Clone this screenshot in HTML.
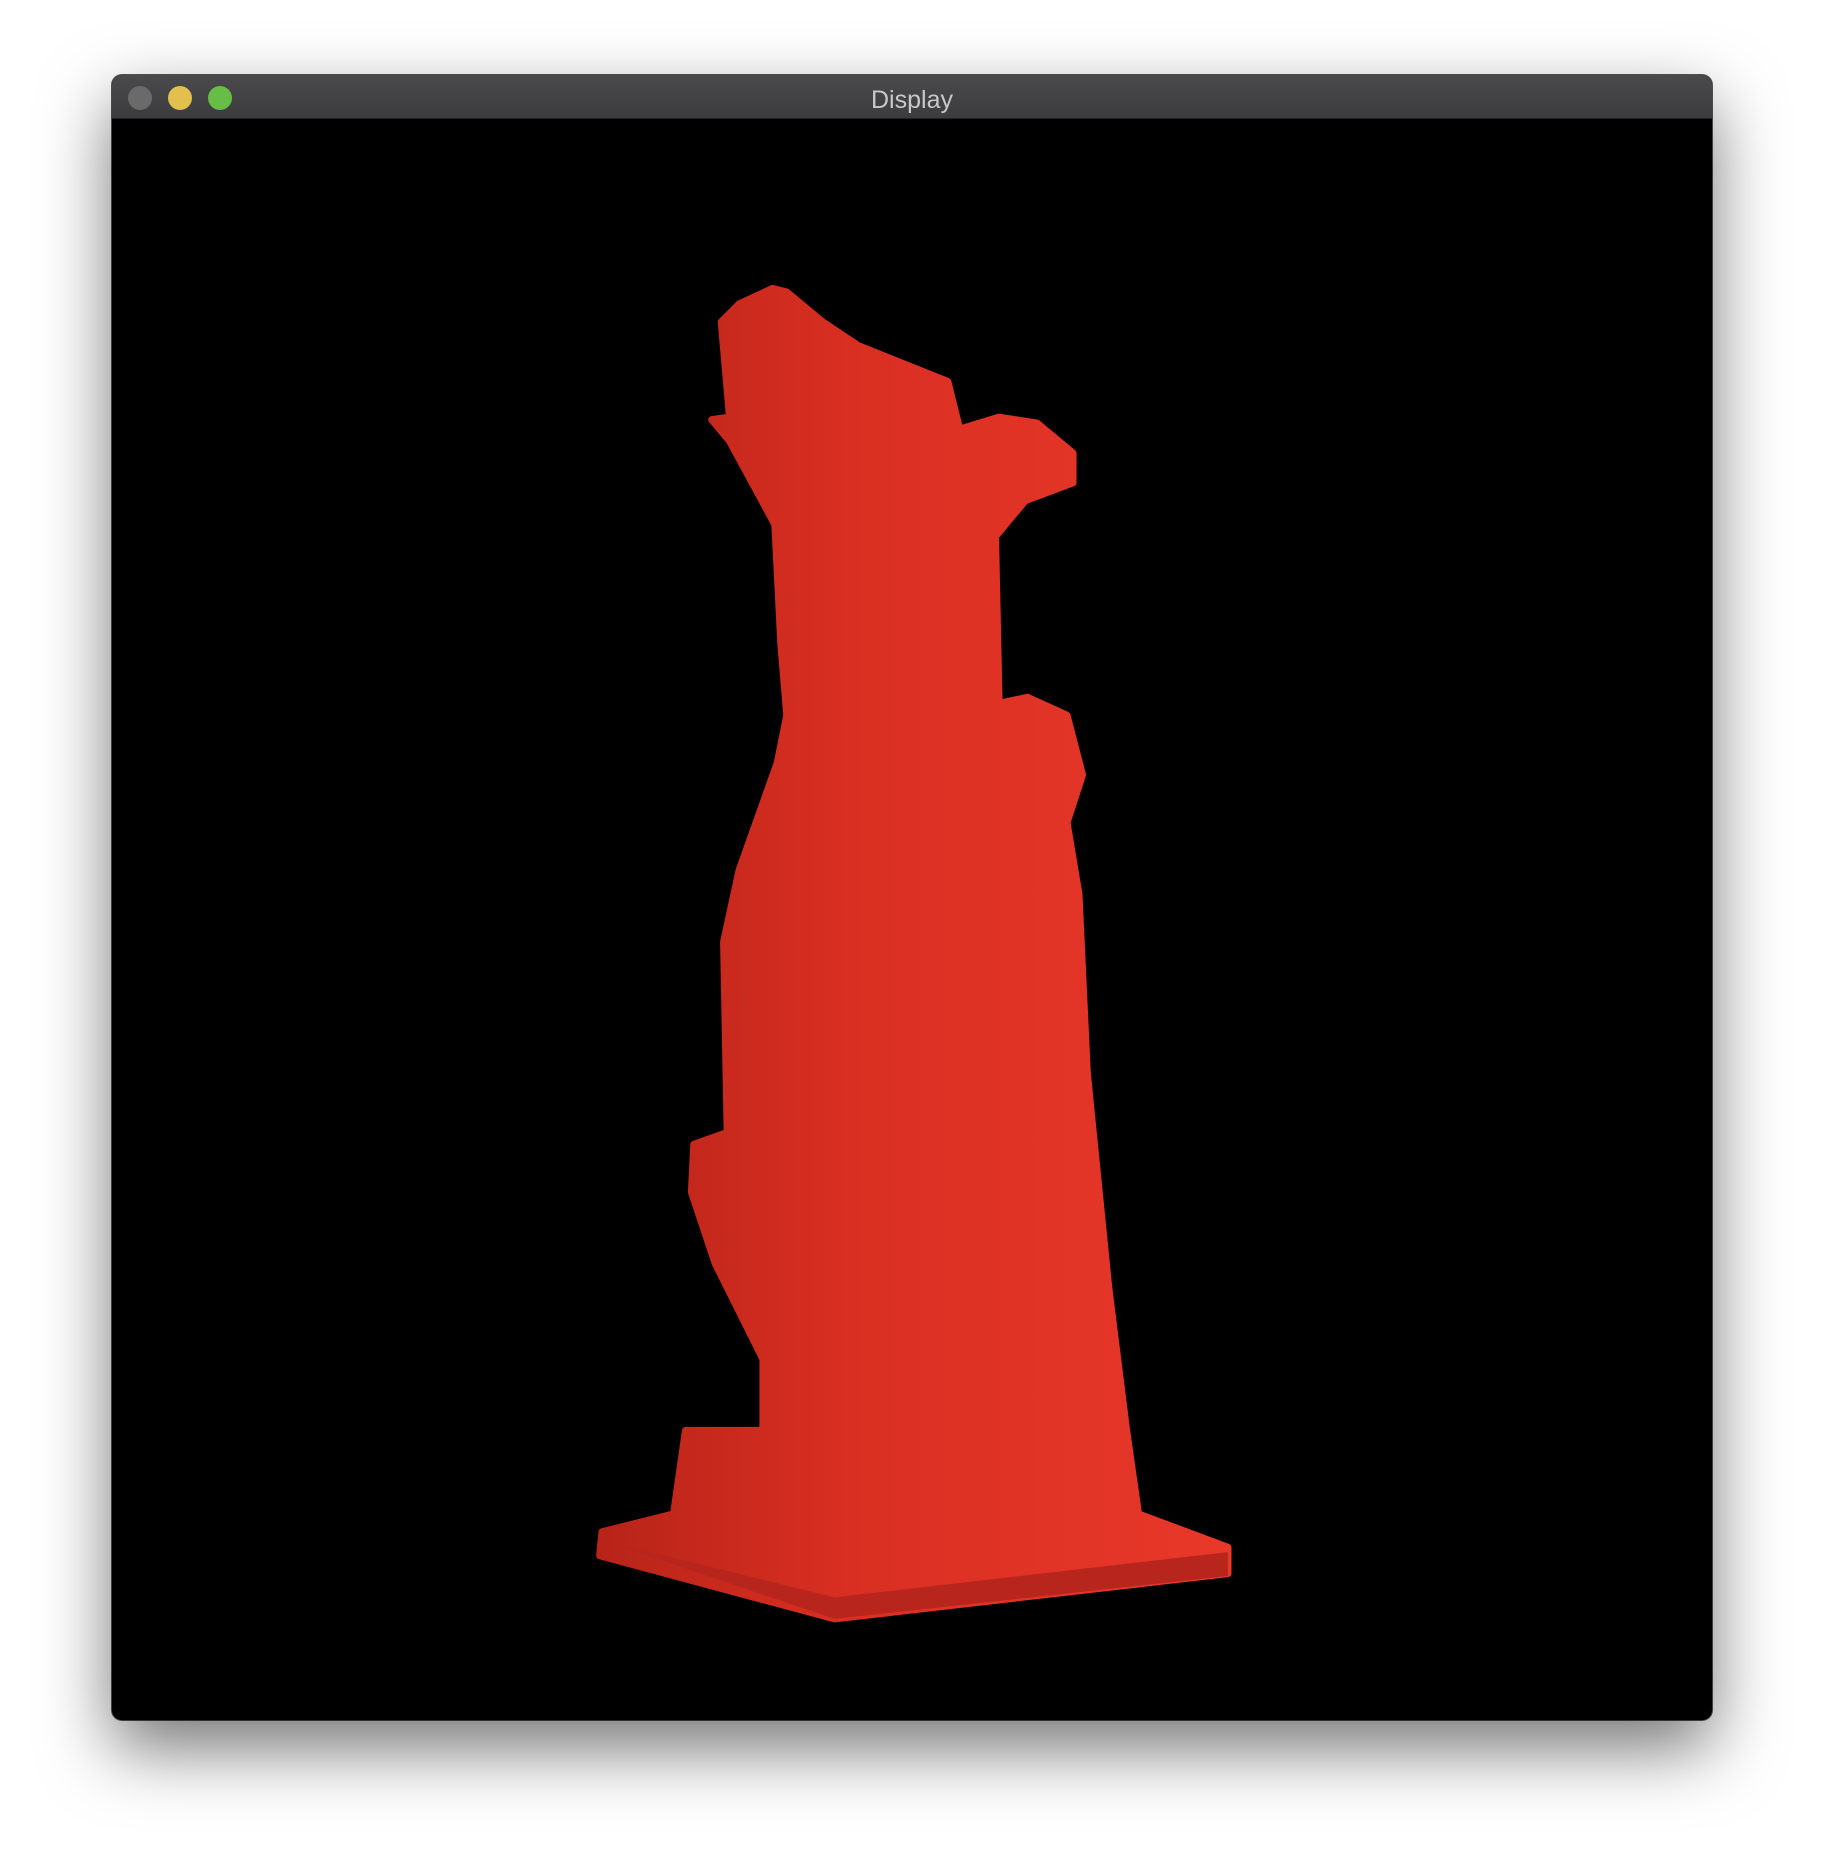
<!DOCTYPE html>
<html><head><style>
html,body{margin:0;padding:0;width:1824px;height:1868px;background:#fff;overflow:hidden;font-family:"Liberation Sans",sans-serif}
.win{position:absolute;left:112px;top:75px;width:1600px;height:1645px;background:#000;border-radius:10px;box-shadow:0 28px 70px rgba(0,0,0,.55),0 0 0 1px #555;overflow:hidden}
.tb{position:absolute;left:0;top:0;right:0;height:43px;background:linear-gradient(#4a4a4c,#3c3c3e);border-bottom:1px solid #222}
.c{position:absolute;top:11px;width:24px;height:24px;border-radius:50%}
.t{position:absolute;left:0;right:0;top:4px;line-height:43px;text-align:center;color:#c8c8c8;font-size:25px}
svg{position:absolute;left:0;top:0}
</style></head><body>
<div class="win">
<div class="tb">
<div class="c" style="left:16px;background:#6a6a6a"></div>
<div class="c" style="left:56px;background:#e1c04f"></div>
<div class="c" style="left:96px;background:#67bd46"></div>
<div class="t">Display</div>
</div>
</div>
<svg width="1824" height="1868" viewBox="0 0 1530 1567">
<defs><linearGradient id="g" x1="0" x2="1" y1="0" y2="0">
<stop offset="0" stop-color="#b82418"/><stop offset="0.4" stop-color="#d92f22"/><stop offset="1" stop-color="#e8382a"/></linearGradient></defs>
<path fill="url(#g)" stroke="url(#g)" stroke-width="6" stroke-linejoin="round" d="M648,242 L620,255 L605,270 L612,350 L597,352 L612,370 L650,440 L655,540 L660,600 L652,640 L620,730 L607,790 L610,950 L582,960 L580,1000 L600,1060 L640,1140 L640,1200 L575,1200 L565,1270 L505,1285 L503,1305 L700,1358 L1030,1320 L1030,1298 L955,1270 L945,1200 L930,1080 L912,900 L905,750 L895,690 L908,650 L895,600 L862,585 L838,590 L835,450 L860,420 L900,405 L900,380 L870,355 L838,350 L805,360 L795,320 L770,310 L720,290 L690,270 L660,245 Z"/>
<path fill="#b8251c" d="M505,1292 L700,1358 L1030,1322 L1030,1302 L700,1340 Z"/>
</svg>
</body></html>
